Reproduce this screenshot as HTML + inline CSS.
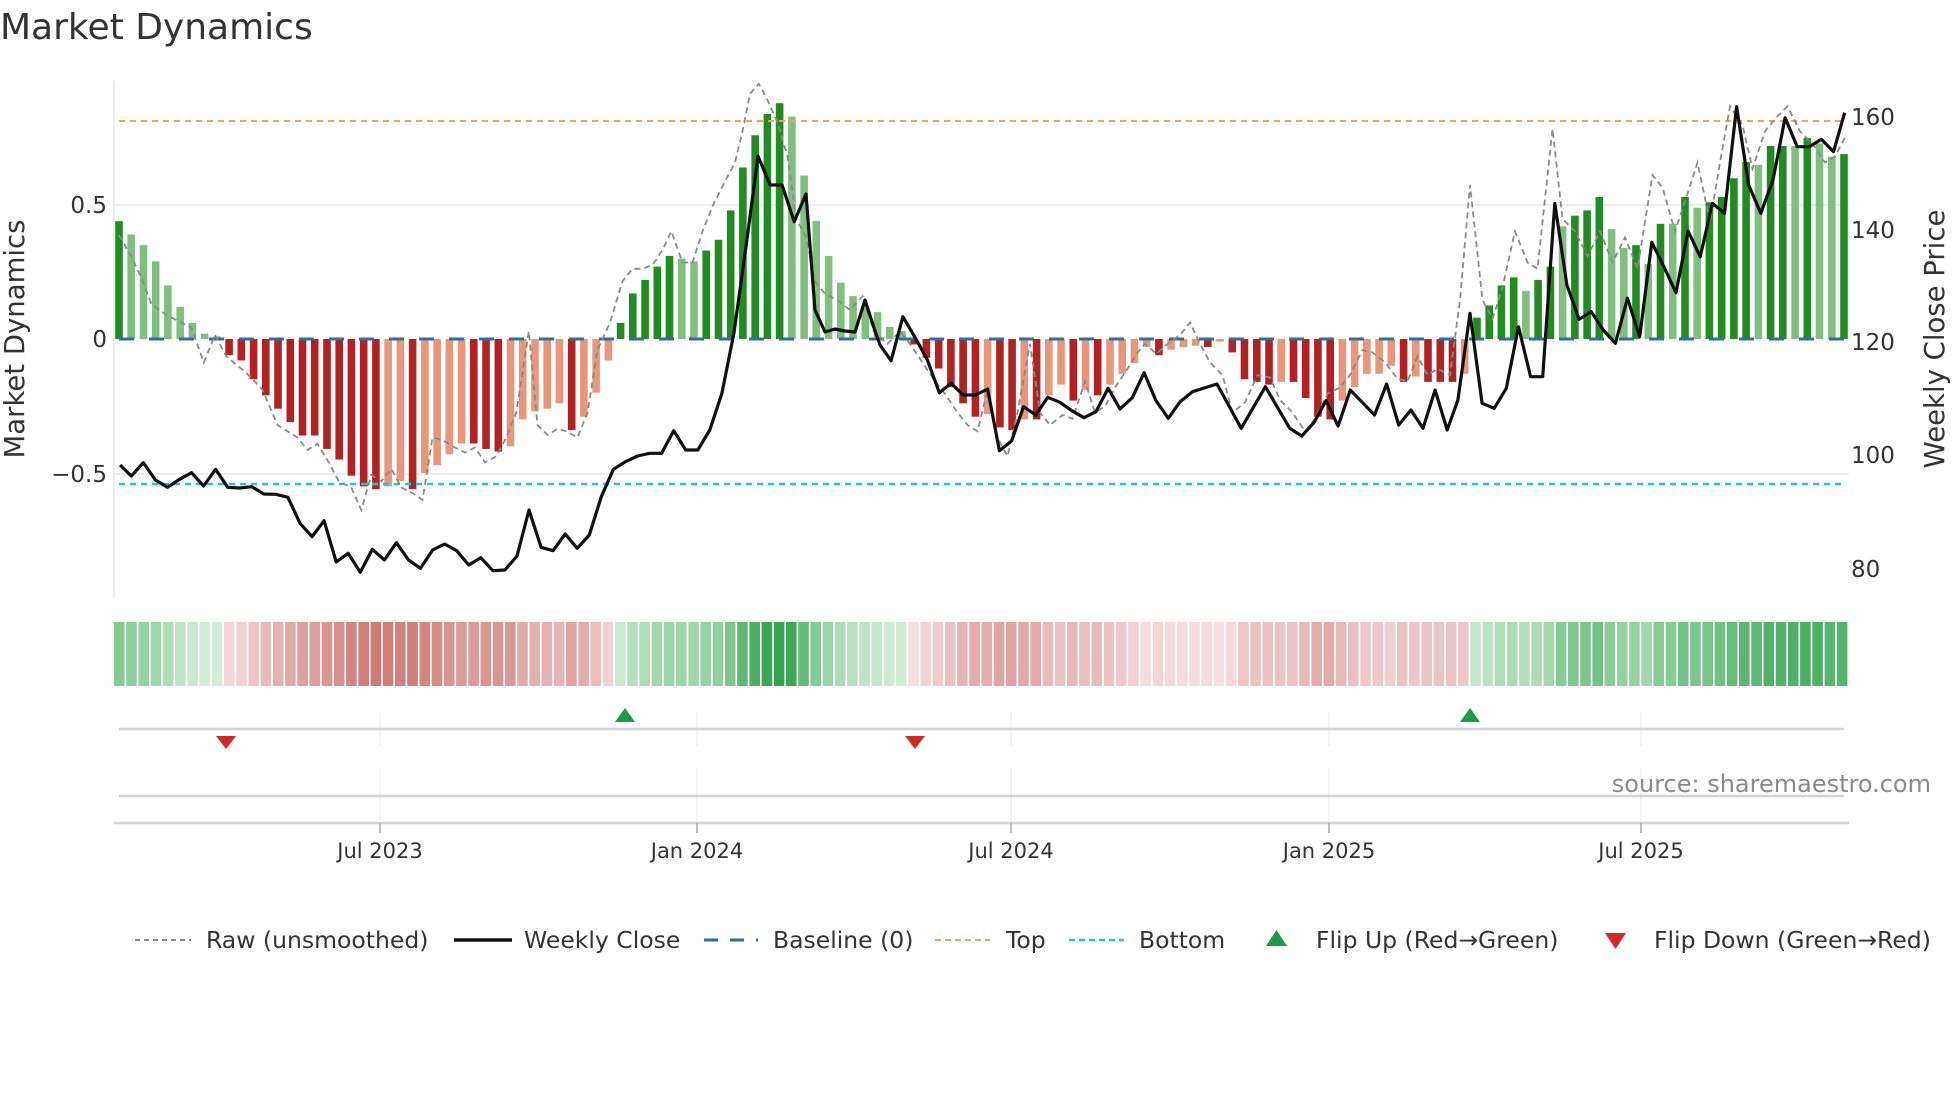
<!DOCTYPE html>
<html><head><meta charset="utf-8"><style>
html,body{margin:0;padding:0;background:#fff;}
body{width:1960px;height:1102px;overflow:hidden;font-family:"DejaVu Sans","Liberation Sans",sans-serif;}
svg text{font-family:"DejaVu Sans","Liberation Sans",sans-serif;}
</style></head><body>
<svg id="s" width="1960" height="1102" viewBox="0 0 1960 1102" xmlns="http://www.w3.org/2000/svg">
<text x="0" y="39" font-size="36" fill="#333">Market Dynamics</text>
<line x1="114" y1="205" x2="1849" y2="205" stroke="#eceef2" stroke-width="2"/>
<line x1="114" y1="474" x2="1849" y2="474" stroke="#eceef2" stroke-width="2"/>
<line x1="114" y1="81" x2="114" y2="598" stroke="#eceef2" stroke-width="2"/>
<g id="bars"></g>
<line x1="119" y1="339" x2="1844" y2="339" stroke="#2a6fa8" stroke-width="3" stroke-dasharray="15,15"/>
<line x1="119" y1="121" x2="1844" y2="121" stroke="#f0a35e" stroke-width="2" stroke-dasharray="6,5"/>
<line x1="119" y1="484" x2="1844" y2="484" stroke="#22c4d8" stroke-width="2.5" stroke-dasharray="6,5"/>
<path id="raw" fill="none" stroke="#8a8a8a" stroke-width="1.8" stroke-dasharray="6,4"/>
<path id="price" fill="none" stroke="#111" stroke-width="3.2" stroke-linejoin="round"/>
<g font-size="23" fill="#333" text-anchor="end">
<text x="107" y="213">0.5</text>
<text x="107" y="347">0</text>
<text x="107" y="482">−0.5</text>
</g>
<text transform="translate(24,339) rotate(-90)" font-size="27.5" fill="#333" text-anchor="middle">Market Dynamics</text>
<g font-size="23" fill="#333">
<text x="1851" y="125">160</text>
<text x="1851" y="238">140</text>
<text x="1851" y="350">120</text>
<text x="1851" y="463">100</text>
<text x="1851" y="577">80</text>
</g>
<text transform="translate(1944,339) rotate(-90)" font-size="27.5" fill="#333" text-anchor="middle">Weekly Close Price</text>
<g id="heat"></g>
<g stroke="#eef0f3" stroke-width="1.5">
<line x1="380" y1="712" x2="380" y2="746"/><line x1="697" y1="712" x2="697" y2="746"/><line x1="1011" y1="712" x2="1011" y2="746"/><line x1="1329" y1="712" x2="1329" y2="746"/><line x1="1641" y1="712" x2="1641" y2="746"/>
<line x1="380" y1="768" x2="380" y2="823"/><line x1="697" y1="768" x2="697" y2="823"/><line x1="1011" y1="768" x2="1011" y2="823"/><line x1="1329" y1="768" x2="1329" y2="823"/><line x1="1641" y1="768" x2="1641" y2="823"/>
</g>
<line x1="119" y1="729" x2="1844" y2="729" stroke="#d4d4d4" stroke-width="2.5"/>
<line x1="119" y1="796" x2="1844" y2="796" stroke="#d4d4d4" stroke-width="2.5"/>
<line x1="114" y1="823" x2="1849" y2="823" stroke="#d4d4d4" stroke-width="2.5"/>
<g stroke="#aaa" stroke-width="1.5">
<line x1="380" y1="823" x2="380" y2="833"/><line x1="697" y1="823" x2="697" y2="833"/><line x1="1011" y1="823" x2="1011" y2="833"/><line x1="1329" y1="823" x2="1329" y2="833"/><line x1="1641" y1="823" x2="1641" y2="833"/>
</g>
<polygon points="615,722 635,722 625,708" fill="#1f9a46"/>
<polygon points="1460,722 1480,722 1470,708" fill="#1f9a46"/>
<polygon points="216,736 236,736 226,749" fill="#d62728"/>
<polygon points="905,736 925,736 915,749" fill="#d62728"/>
<text x="1931" y="792" font-size="24" fill="#8a8a8a" text-anchor="end">source: sharemaestro.com</text>
<g font-size="21" fill="#333" text-anchor="middle">
<text x="380" y="858">Jul 2023</text><text x="697" y="858">Jan 2024</text><text x="1011" y="858">Jul 2024</text><text x="1329" y="858">Jan 2025</text><text x="1641" y="858">Jul 2025</text>
</g>
<line x1="135" y1="940" x2="191" y2="940" stroke="#888" stroke-width="2" stroke-dasharray="5,4"/>
<line x1="454" y1="940" x2="512" y2="940" stroke="#111" stroke-width="3.5"/>
<line x1="704" y1="940" x2="758" y2="940" stroke="#2a6fa8" stroke-width="3" stroke-dasharray="14,12"/>
<line x1="935" y1="940" x2="990" y2="940" stroke="#f0a35e" stroke-width="2" stroke-dasharray="6,4"/>
<line x1="1069" y1="940" x2="1124" y2="940" stroke="#22c4d8" stroke-width="2.5" stroke-dasharray="6,4"/>
<polygon points="1266,946 1287,946 1276.5,930" fill="#1f9a46"/>
<polygon points="1605,933 1626,933 1615.5,949" fill="#d62728"/>
<g font-size="23.5" fill="#333">
<text x="206" y="948">Raw (unsmoothed)</text>
<text x="524" y="948">Weekly Close</text>
<text x="773" y="948">Baseline (0)</text>
<text x="1006" y="948">Top</text>
<text x="1139" y="948">Bottom</text>
<text x="1316" y="948">Flip Up (Red→Green)</text>
<text x="1654" y="948">Flip Down (Green→Red)</text>
</g>
</svg>
<script>
(function(){
var NS="http://www.w3.org/2000/svg";
var G="g",R="r";
var segs=[
[G,".44d .39l .35l .29l .20l .12l .06l .02l .01l"],
[R,".06d .08d .15d .21d .26d .31d .36d .36d .41d .45d .51d .55d .56d .55l .53l .56d .50l .47l .43l .39l .39d .41d .42d .40l .30l .27l .26l .24l .34d .29l .20l .08l"],
[G,".06d .17d .22d .27d .31d .30l .29l .33d .37d .48d .64d .76d .84d .88d .83l .61l .44l .31l .21l .16l .12l .10l .045l .03l"],
[R,".02d .07d .11d .18d .24d .29d .28l .33d .34d .30l .30d .21l .17l .23d .19l .21d .17l .13l .09l .03l .06d .04l .03l .025l .03d .01l .05d .15d .16d .17d .16l .16d .22d .29d .30d .23l .18l .13l .13l .10l .16d .14l .16d .16d .16d .13l"],
[G,".08d .125d .20d .23d .18l .22d .27d .42l .46d .48d .53d .41l .34l .35d .28l .43d .43l .53d .49l .51d .53d .60d .66d .65l .72d .72d .72l .75d .73l .68l .69d"]
];
var bars=[];
segs.forEach(function(s){s[1].split(" ").forEach(function(t){bars.push({sign:s[0],v:parseFloat(t),d:t.slice(-1)=="d"});});});
var bg=document.getElementById("bars"),hg=document.getElementById("heat");
var n=bars.length,sp=(1844-119)/(n-1),k=268;
function mix(a,b,t){t=Math.max(0,Math.min(1,t));return "rgb("+[0,1,2].map(function(i){return Math.round(a[i]+(b[i]-a[i])*t)}).join(",")+")";}
bars.forEach(function(b,i){
 var cx=119+i*sp,h=b.v*k,r=document.createElementNS(NS,"rect");
 r.setAttribute("x",(cx-3.8).toFixed(1));r.setAttribute("width","7.6");
 if(b.sign==G){r.setAttribute("y",(339-h).toFixed(1));r.setAttribute("fill",b.d?"#228b22":"#80bf80");}
 else{r.setAttribute("y","339");r.setAttribute("fill",b.d?"#b22222":"#e9967a");}
 r.setAttribute("height",Math.max(h,1).toFixed(1));bg.appendChild(r);
 var q=document.createElementNS(NS,"rect");
 var hx=114+i*(1735/n);
 q.setAttribute("x",hx.toFixed(1));q.setAttribute("width",(1735/n-1.6).toFixed(1));
 q.setAttribute("y","622");q.setAttribute("height","64");
 q.setAttribute("fill",b.sign==G?mix([214,238,216],[52,164,80],b.v/0.88):mix([246,226,226],[207,124,120],b.v/0.56));
 hg.appendChild(q);
});
var pts=[];
function add(arr,ox,oy,kx,ky){for(var i=0;i<arr.length;i+=2)pts.push([ox+arr[i]/kx,oy+arr[i+1]/ky]);}
add([45,1155,70,1188,97,1148,124,1200,151,1222,178,1198,205,1178,232,1218,259,1168,286,1222,313,1224,340,1220,367,1242,394,1243,421,1252,448,1330,475,1370,502,1322,529,1446,556,1420,583,1477,610,1408,637,1440,664,1388,691,1440,718,1465,745,1410,772,1392,799,1412,826,1455,853,1433,880,1472,907,1470,934,1428,961,1290,988,1402,1015,1412,1042,1362,1069,1405,1096,1365,1123,1250,1150,1168,1177,1145,1204,1128,1231,1120,1258,1120,1285,1052,1312,1110,1339,1110,1366,1050,1393,940,1420,760,1447,500,1474,228,1501,315,1528,315,1555,425],100,80,2.24,3);
pts.push([806,194],[815,310],[825,332],[835,329],[845,331],[855,332],[865,300],[875,331]);
add([0,765,28,812,58,680,90,745,120,810,150,908,180,880,210,915,242,915,272,897,302,1082,333,1052,363,950,394,975,424,922,455,937,485,962,516,983,546,965,577,895,607,957,638,923,668,848,698,932,729,985,759,935,790,905],880,90,2.529,3);
add([35,912,85,1045,135,920,185,1045,210,1068,235,1028,260,962,285,1038,310,930,360,1005,385,912,410,1035,435,990,460,1045,485,930,510,1050,532,960,557,700,582,970,607,985,632,925,657,740,682,890,707,890,732,370,757,615,782,718,807,695,832,750,857,790,882,655,907,770,932,487,957,560,982,638,1007,453,1032,530,1057,370,1082,400,1107,80,1132,315,1157,400,1182,300,1207,113,1232,200,1257,200,1282,178,1307,215,1330,98],1200,80,2.063,3);
document.getElementById("price").setAttribute("d","M"+pts.map(function(p){return p[0].toFixed(1)+","+p[1].toFixed(1)}).join("L"));
var raw=[95,188,105,205,113,222,121,243,133,252,145,258,153,262,163,290,172,268,181,285,193,295,201,302,210,312,222,340,230,345,238,350,246,360,254,355,263,370,271,385,281,390,289,408,297,380,305,385,313,375,321,390,331,395,338,400,346,350,354,352,364,358,372,362,380,358,388,370,397,365,405,350,413,330,423,265,430,340,438,348,446,343,453,345,462,350,470,330,478,280,488,258,498,225,506,215,514,215,522,212,530,200,537,185,546,210,554,210,562,185,570,165,580,145,588,130,594,105,600,75,607,67,614,80,622,98,630,125,637,175,645,190,652,225,660,235,670,240,680,248,690,237,699,265,710,275,720,265,728,275,738,290,748,305,756,315,766,330,774,340,782,345,790,312,798,350,806,365,814,330,824,275,832,330,840,340,850,332,858,335,868,305,876,330,884,325,892,310,902,295,910,282,916,275,925,283,934,275,944,268,952,258,960,275,968,290,978,300,986,330,996,322,1006,300,1016,302,1024,320,1034,330,1044,345,1052,335,1062,315,1072,310,1080,300,1090,280,1098,282,1108,290,1118,303,1126,305,1134,285,1142,300,1150,295,1160,300,1168,240,1176,148,1186,240,1194,255,1202,230,1212,185,1222,210,1230,215,1242,103,1250,175,1260,185,1270,205,1280,185,1290,210,1300,190,1310,215,1322,140,1330,150,1340,185,1350,155,1358,130,1368,178,1376,130,1384,85,1394,100,1402,135,1412,105,1420,95,1430,85,1440,105,1450,115,1460,130,1468,125,1476,110];
var d="";for(var i=0;i<raw.length;i+=2){d+=(i?"L":"M")+(raw[i]*1.25).toFixed(1)+","+(raw[i+1]*1.25).toFixed(1);}
document.getElementById("raw").setAttribute("d",d);
})();
</script>
</body></html>
